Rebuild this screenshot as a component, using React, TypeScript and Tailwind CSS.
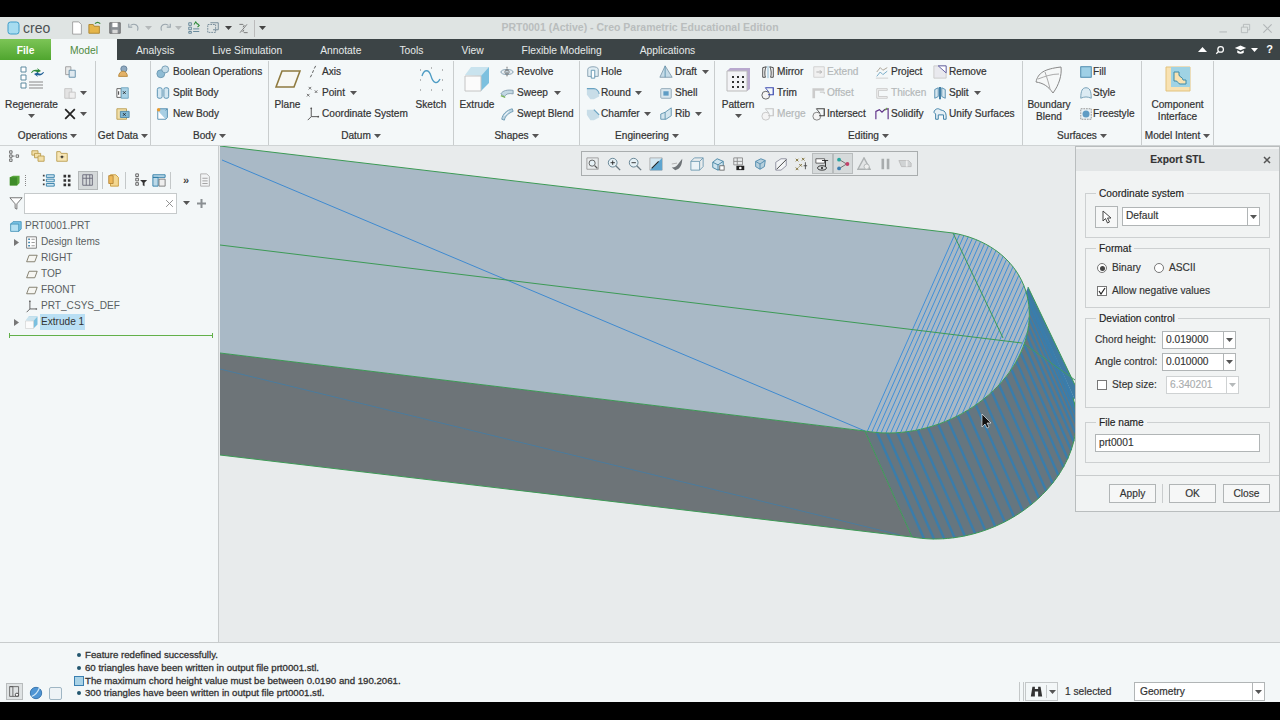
import type { ReactNode } from "react";

// small svg wrapper for the toolbar glyphs
function Ic({ s = 14, v = 16, children }: { s?: number; v?: number; children: ReactNode }) {
  return (
    <svg width={s} height={s} viewBox={`0 0 ${v} ${v}`} fill="none" className="shrink-0">
      {children}
    </svg>
  );
}

function Caret({ c = "#555" }: { c?: string }) {
  return (
    <svg width="7" height="4" viewBox="0 0 7 4" className="shrink-0">
      <path d="M0 0h7L3.5 4z" fill={c} />
    </svg>
  );
}

const Copy = () => (
  <Ic>
    <path d="M3 2h6v9H3z" fill="#e8eaea" stroke="#999" />
    <path d="M7 6h7v8H7z" fill="#dfe9ef" stroke="#5e8aa6" />
  </Ic>
);
const Paste = () => (
  <Ic>
    <path d="M2 3h8v11H2z" fill="#e3e3e3" stroke="#c4c4c4" />
    <path d="M7 7h7v7H7z" fill="#eee" stroke="#c4c4c4" />
  </Ic>
);
const Cross = () => (
  <Ic>
    <path d="M2.5 2.5l11 11M13.5 2.5l-11 11" stroke="#222" strokeWidth="2" />
  </Ic>
);
const GetA = () => (
  <Ic>
    <circle cx="9" cy="4.5" r="3.5" fill="#8fa9c0" stroke="#5e7c96" />
    <path d="M3 13c0-4 3-6 5-6s5 2 5 6z" fill="#e3b269" stroke="#b58637" />
  </Ic>
);
const GetB = () => (
  <Ic>
    <path d="M1 3h5v10H1z" fill="#fff" stroke="#555" />
    <path d="M6 2h8v12H6z" fill="#a9d2e6" stroke="#6da3bf" />
    <path d="M3 6v4M8 6l3 3M11 6L8 9" stroke="#222" />
  </Ic>
);
const GetC = () => (
  <Ic>
    <path d="M1 2h11v12H1z" fill="#f1dfa8" stroke="#b99c4d" />
    <path d="M5 5h10v7H5z" fill="#7fb6d4" stroke="#4e86a6" />
    <path d="M8 7l3 3M11 7l-3 3" stroke="#222" />
  </Ic>
);
const BoolIc = () => (
  <Ic>
    <circle cx="5.5" cy="10" r="4.5" fill="#8fbcd4" stroke="#6a97b0" />
    <circle cx="10.5" cy="5" r="4" fill="#c5dce8" stroke="#6a97b0" />
  </Ic>
);
const SplitBody = () => (
  <Ic>
    <rect x="1.5" y="2" width="5.5" height="12" rx="2" fill="#d4e7f1" stroke="#4b88ab" />
    <rect x="9" y="2" width="5.5" height="12" rx="2" fill="#d4e7f1" stroke="#4b88ab" />
  </Ic>
);
const NewBody = () => (
  <Ic>
    <path d="M2 4h9v10H2z" fill="#fff" stroke="#4b88ab" />
    <path d="M2 4l2-2h9v10l-2 2M11 4l2-2" fill="#a8cfe4" stroke="#4b88ab" />
    <circle cx="3" cy="3" r="2" fill="#e79a2e" />
  </Ic>
);
const PlaneIc = ({ s = 26 }: { s?: number }) => (
  <Ic s={s} v={26}>
    <path d="M7 5h18l-6 16H1z" fill="#f7f7f3" stroke="#8f7a3f" strokeWidth="1.6" />
  </Ic>
);
const AxisIc = () => (
  <Ic>
    <path d="M11 1l-1.5 3M8.6 6l-1.2 3M6.5 11l-1.5 3" stroke="#555" strokeWidth="1.1" />
  </Ic>
);
const PointIc = () => (
  <Ic>
    <path d="M3 1l3 3M6 1L3 4M10 5l3 3M13 5l-3 3M1 9l3 3M4 9l-3 3" stroke="#666" />
  </Ic>
);
const CsysIc = ({ s = 14 }: { s?: number }) => (
  <Ic s={s}>
    <path d="M6 1v10l8 0M6 11l-4 4" stroke="#555" strokeWidth="1.1" />
    <circle cx="6" cy="1.5" r="1" fill="#555" />
    <circle cx="14" cy="11" r="1" fill="#555" />
  </Ic>
);
const SketchIc = () => (
  <Ic s={26} v={26}>
    <path d="M2 4h1M13 2h1M24 4h1M2 14h1M24 14h1M2 24h1M13 24h1M24 24h1" stroke="#777" />
    <path d="M4 10c2-7 7-7 9 0s6 9 9 3" stroke="#4e9cc4" strokeWidth="1.3" />
  </Ic>
);
const ExtrudeIc = ({ s = 26 }: { s?: number }) => (
  <Ic s={s} v={26}>
    <path d="M7 1h18v16l-8 8V10z" fill="#7cc0df" />
    <path d="M1 9l6-8h18l-8 9z" fill="#c9e3ee" />
    <path d="M1 10h16v15H1z" fill="#fbfbfb" stroke="#c4c4c4" />
  </Ic>
);
const Revolve = () => (
  <Ic>
    <ellipse cx="8" cy="8" rx="7" ry="3" fill="#e7eef2" stroke="#7f9aad" />
    <circle cx="8" cy="8" r="2.5" fill="#c8d8e2" stroke="#777" />
    <path d="M8 2v12" stroke="#666" strokeDasharray="2 1" />
  </Ic>
);
const Sweep = () => (
  <Ic>
    <path d="M1 9c2-4 8-5 14-4v4c-5-1-8 0-10 3z" fill="#c3d8e3" stroke="#7f9aad" />
    <path d="M1 11l5 2" stroke="#78b35a" strokeWidth="1.4" />
  </Ic>
);
const SweptBlend = () => (
  <Ic>
    <path d="M2 14c1-6 5-10 12-12l1 3C10 7 6 10 5 15z" fill="#bad4e3" stroke="#6a97b0" />
    <path d="M5 10l5-5" stroke="#fff" />
  </Ic>
);
const Hole = () => (
  <Ic>
    <path d="M2 5c0-4 12-4 12 0v8H2z" fill="#e1edf3" stroke="#7f9aad" />
    <path d="M6 6h4v9H6z" fill="#fff" stroke="#5a90ad" />
  </Ic>
);
const Round = () => (
  <Ic>
    <path d="M1 3h8c3 0 6 3 6 6v3L9 15H5l-4-5z" fill="#c8dde8" />
    <path d="M1 3h8c3 0 6 3 6 6" stroke="#6aa3c2" strokeWidth="1.2" />
  </Ic>
);
const Chamfer = () => (
  <Ic>
    <path d="M1 3h8l6 6v3l-6 3H5L1 9z" fill="#c8dde8" />
    <path d="M9 3l6 6" stroke="#6aa3c2" strokeWidth="1.4" />
  </Ic>
);
const Draft = () => (
  <Ic>
    <path d="M7 1l8 13H1z" fill="#c6dce8" stroke="#7f9aad" />
    <path d="M7 1v13" stroke="#5a90ad" />
  </Ic>
);
const Shell = () => (
  <Ic>
    <rect x="2" y="3" width="12" height="11" rx="1" fill="#d8e6ee" stroke="#8aa2b3" />
    <rect x="5" y="6" width="6" height="5" fill="#5f9cc4" />
  </Ic>
);
const Rib = () => (
  <Ic>
    <path d="M2 8l5-2 7-5v9l-6 4H2z" fill="#d3e5ee" stroke="#5a90ad" />
    <path d="M7 6v8" stroke="#5a90ad" />
  </Ic>
);
const PatternIc = () => (
  <Ic s={26} v={26}>
    <path d="M2 5l3-3h20v21l-3 2z" fill="#b9a9cf" />
    <path d="M2 5h20v20H2z" fill="#f3f3f6" stroke="#bbb" />
    {[7, 12, 17].map((x) =>
      [10, 15, 20].map((y) => <rect key={`${x}${y}`} x={x} y={y} width="2" height="2" fill="#333" />),
    )}
  </Ic>
);
const Mirror = () => (
  <Ic>
    <path d="M6 2c-2 2-2 10-1 12H2V3zM10 2c2 2 2 10 1 12h3V3z" stroke="#333" fill="#fff" />
    <path d="M8 1v14" stroke="#7fb1cf" />
  </Ic>
);
const Trim = ({ c = "#555", b = "#3a49b0" }: { c?: string; b?: string }) => (
  <Ic>
    <circle cx="5.5" cy="10.5" r="4.5" fill="#f4f4f4" stroke={c} />
    <path d="M5 2h9v8H8" stroke={b} strokeWidth="1.4" />
    <path d="M5 2l4 5" stroke={b} />
  </Ic>
);
const Extend = () => (
  <Ic>
    <path d="M2 2h12v12H2z" fill="#f0f0f0" stroke="#cfcfcf" />
    <path d="M5 8h6M9 6l2 2-2 2" stroke="#aaa" />
  </Ic>
);
const Offset = () => (
  <Ic>
    <path d="M2 14V4h12" stroke="#ccc" strokeWidth="3" />
    <path d="M9 7h5v2" stroke="#bbb" />
  </Ic>
);
const Project = () => (
  <Ic>
    <path d="M2 13l4-5 3 3 5-4" stroke="#6aa3c2" />
    <path d="M2 8l4-5 3 3 5-3" stroke="#a39a8c" />
    <path d="M1 15h14" stroke="#ccc" />
  </Ic>
);
const Thicken = () => (
  <Ic>
    <path d="M2 3h12v2H4v7h10v2H2z" fill="#f2f2f2" stroke="#c8c8c8" />
  </Ic>
);
const Solidify = () => (
  <Ic>
    <path d="M1 14V5l4-2 3 3 3-3 4-1v12" stroke="#5d2f87" strokeWidth="1.3" />
    <path d="M11 4l3-3" stroke="#6aa83c" strokeWidth="1.2" />
  </Ic>
);
const Remove = () => (
  <Ic>
    <path d="M1 1h14v14H1z" fill="#e9e9ee" stroke="#c8c8c8" />
    <path d="M6 1l9 8V1z" fill="#fff" stroke="#53509a" />
  </Ic>
);
const Split = () => (
  <Ic>
    <path d="M2 4l4-2v10l-4 2zM10 2l4 2v10l-4-2z" fill="#d8e6ee" stroke="#4b88ab" />
    <path d="M8 1v14" stroke="#2c6f9a" strokeWidth="2" />
  </Ic>
);
const Unify = () => (
  <Ic>
    <path d="M1 6c1-4 5-5 7-3l3 1c2 0 4 3 4 6v4h-3V9H6v5H3V8z" fill="#e7f0f5" stroke="#3b7ea6" strokeWidth="1.1" />
  </Ic>
);
const BoundaryIc = () => (
  <Ic s={28} v={28}>
    <path d="M1 16C3 7 9 3 26 1c1 8-2 18-8 26C13 20 8 17 1 16z" fill="#f6f8f8" stroke="#888" />
    <path d="M10 6c2 6 4 12 5 17M3 13c8-3 14-5 21-5" stroke="#aaa" />
  </Ic>
);
const Fill = () => (
  <Ic>
    <rect x="2" y="2" width="12" height="12" fill="#9fd0e6" stroke="#3b7ea6" />
  </Ic>
);
const Style = () => (
  <Ic>
    <path d="M2 14c0-9 2-12 6-12s6 3 6 12c-4-2-8-2-12 0z" fill="#dcebf3" stroke="#6a97b0" />
  </Ic>
);
const Freestyle = () => (
  <Ic>
    <rect x="2" y="2" width="12" height="12" fill="#e9f1f5" stroke="#8a8a8a" strokeDasharray="2 1" />
    <circle cx="8" cy="8" r="4" fill="#5f9cc4" />
  </Ic>
);
const ComponentIc = () => (
  <Ic s={26} v={26}>
    <path d="M1 1h24v24H1z" fill="#f8e2b2" stroke="#e2c27c" />
    <path d="M6 1h19v20H6z" fill="#9fd3e4" />
    <path d="M9 6h5v3c0 2 4 2 4 5h3v4h-6c-2 0-2-3-4-3H9z" fill="#f8e2b2" stroke="#3a8aa8" />
  </Ic>
);
const RegenIc = () => (
  <Ic s={26} v={26}>
    <path d="M2 1h5v5H2zM2 9h5v5H2zM2 17h5v5H2z" fill="#fff" stroke="#5d8a9f" />
    <path d="M10 19h14M10 22h14M10 16h14" stroke="#888" />
    <path d="M12 7c1-3 4-4 7-3l-1-2 4 3-4 2 0-1c-2-1-4-1-5 1z" fill="#2f8a3a" />
    <path d="M25 6c-1 3-4 4-7 3l1 2-4-3 4-2v1c2 1 4 1 5-1z" fill="#1f5f96" />
  </Ic>
);

function Row({ icon, text, caret, off, tw = "gap-[2px]" }: { icon: ReactNode; text: string; caret?: boolean; off?: boolean; tw?: string }) {
  return (
    <div className={`flex h-[21px] items-center whitespace-nowrap ${tw}`}>
      {icon}
      <span className={off ? "text-[#b4b8b9]" : ""}>{text}</span>
      {caret && (
        <span className="ml-[3px] flex">
          <Caret />
        </span>
      )}
    </div>
  );
}

function Group({ label, w, children }: { label: string; w: string; children: ReactNode }) {
  return (
    <div className={`flex h-[84px] flex-col border-r border-[#c9cdce] ${w}`}>
      <div className="flex h-[64px]">{children}</div>
      <div className="flex h-[20px] items-center justify-center gap-[3px] whitespace-nowrap pt-[2px]">
        {label} <Caret />
      </div>
    </div>
  );
}

function Big({ icon, lines, caret, w }: { icon: ReactNode; lines: string[]; caret?: boolean; w: string }) {
  return (
    <div className={`flex flex-col items-center ${w}`}>
      <div className="flex h-[38px] items-start pt-[5px]">{icon}</div>
      {lines.map((l) => (
        <div key={l} className="h-[12px] whitespace-nowrap leading-[12px]">
          {l}
        </div>
      ))}
      {caret && (
        <div className="mt-[3px]">
          <Caret />
        </div>
      )}
    </div>
  );
}

function Ribbon() {
  return (
    <div className="flex h-[86px] border-b border-[#cfd3d4] bg-[#f4f8f9] pt-[1px] text-[10.1px] text-[#333] [-webkit-text-stroke-width:0.2px]">
      <Group label="Operations" w="w-[96px]">
        <Big w="w-[63px]" icon={<RegenIc />} lines={["Regenerate"]} caret />
        <div className="flex flex-col">
          <Row icon={<Copy />} text="" />
          <Row icon={<Paste />} text="" tw="gap-0" caret />
          <Row icon={<Cross />} text="" tw="gap-0" caret />
        </div>
      </Group>
      <Group label="Get Data" w="w-[55px]">
        <div className="flex flex-col pl-[20px]">
          <Row icon={<GetA />} text="" />
          <Row icon={<GetB />} text="" />
          <Row icon={<GetC />} text="" />
        </div>
      </Group>
      <Group label="Body" w="w-[118px]">
        <div className="flex flex-col pl-[5px]">
          <Row icon={<BoolIc />} text="Boolean Operations" tw="gap-[3px]" />
          <Row icon={<SplitBody />} text="Split Body" tw="gap-[3px]" />
          <Row icon={<NewBody />} text="New Body" tw="gap-[3px]" />
        </div>
      </Group>
      <Group label="Datum" w="w-[185px]">
        <Big w="w-[37px]" icon={<PlaneIc />} lines={["Plane"]} />
        <div className="flex w-[106px] flex-col">
          <Row icon={<AxisIc />} text="Axis" />
          <Row icon={<PointIc />} text="Point" caret />
          <Row icon={<CsysIc />} text="Coordinate System" />
        </div>
        <Big w="w-[38px]" icon={<SketchIc />} lines={["Sketch"]} />
      </Group>
      <Group label="Shapes" w="w-[126px]">
        <Big w="w-[46px]" icon={<ExtrudeIc />} lines={["Extrude"]} />
        <div className="flex flex-col">
          <Row icon={<Revolve />} text="Revolve" tw="gap-[3px]" />
          <Row icon={<Sweep />} text="Sweep" caret tw="gap-[3px]" />
          <Row icon={<SweptBlend />} text="Swept Blend" tw="gap-[3px]" />
        </div>
      </Group>
      <Group label="Engineering" w="w-[135px]">
        <div className="flex w-[79px] flex-col pl-[6px]">
          <Row icon={<Hole />} text="Hole" tw="gap-[1px]" />
          <Row icon={<Round />} text="Round" caret tw="gap-[1px]" />
          <Row icon={<Chamfer />} text="Chamfer" caret tw="gap-[1px]" />
        </div>
        <div className="flex flex-col">
          <Row icon={<Draft />} text="Draft" caret />
          <Row icon={<Shell />} text="Shell" />
          <Row icon={<Rib />} text="Rib" caret />
        </div>
      </Group>
      <Group label="Editing" w="w-[308px]">
        <Big w="w-[46px]" icon={<PatternIc />} lines={["Pattern"]} caret />
        <div className="flex w-[51px] flex-col">
          <Row icon={<Mirror />} text="Mirror" />
          <Row icon={<Trim />} text="Trim" />
          <Row icon={<Trim c="#c4c4c4" b="#c4c4c4" />} text="Merge" off />
        </div>
        <div className="flex w-[63px] flex-col">
          <Row icon={<Extend />} text="Extend" off tw="gap-[1px]" />
          <Row icon={<Offset />} text="Offset" off tw="gap-[1px]" />
          <Row icon={<Trim c="#777" b="#444" />} text="Intersect" tw="gap-[1px]" />
        </div>
        <div className="flex w-[58px] flex-col">
          <Row icon={<Project />} text="Project" />
          <Row icon={<Thicken />} text="Thicken" off />
          <Row icon={<Solidify />} text="Solidify" />
        </div>
        <div className="flex flex-col">
          <Row icon={<Remove />} text="Remove" />
          <Row icon={<Split />} text="Split" caret />
          <Row icon={<Unify />} text="Unify Surfaces" />
        </div>
      </Group>
      <Group label="Surfaces" w="w-[119px]">
        <Big w="w-[52px]" icon={<BoundaryIc />} lines={["Boundary", "Blend"]} />
        <div className="flex flex-col pl-[4px]">
          <Row icon={<Fill />} text="Fill" tw="gap-0" />
          <Row icon={<Style />} text="Style" tw="gap-0" />
          <Row icon={<Freestyle />} text="Freestyle" tw="gap-0" />
        </div>
      </Group>
      <Group label="Model Intent" w="w-[72px]">
        <Big w="w-full" icon={<ComponentIc />} lines={["Component", "Interface"]} />
      </Group>
    </div>
  );
}

function TitleBar() {
  return (
    <div className="relative flex h-[22px] items-center bg-[#dfe4e3] pl-[7px]">
      <svg width="13" height="14" viewBox="0 0 13 14" className="shrink-0">
        <rect x="1" y="1" width="11" height="12" rx="2.5" fill="#a6dcf0" stroke="#3f9cc9" />
      </svg>
      <span className="ml-[3px] w-[47px] text-[14px] text-[#4c5052]">creo</span>
      <div className="flex items-center">
        <Ic>
          <path d="M3 1h7l3 3v11H3z" fill="#fff" stroke="#999" />
        </Ic>
        <span className="ml-[4px] flex">
          <Ic>
            <path d="M1 4h5l1 2h6v8H1z" fill="#e5b54a" stroke="#a9812c" />
            <path d="M8 3c2-2 4-2 6 0" stroke="#3a8a3a" strokeWidth="1.4" />
          </Ic>
        </span>
        <span className="ml-[6px] flex">
          <Ic>
            <path d="M2 2h12v12H2z" fill="#8a8f94" stroke="#666" />
            <path d="M5 2h6v5H5z" fill="#fff" />
            <path d="M5 10h6v4H5z" fill="#d8d8d8" />
          </Ic>
        </span>
        <span className="ml-[5px] flex">
          <Ic>
            <path d="M4 5c5-3 10 0 8 6M2 3v4h4" stroke="#9aa5ad" strokeWidth="1.3" />
          </Ic>
        </span>
        <span className="ml-[4px] flex">
          <Caret c="#b5b9ba" />
        </span>
        <span className="ml-[6px] flex">
          <Ic>
            <path d="M12 5C7 2 2 5 4 11M14 3v4h-4" stroke="#9aa5ad" strokeWidth="1.3" />
          </Ic>
        </span>
        <span className="ml-[3px] flex">
          <Caret c="#b5b9ba" />
        </span>
        <span className="ml-[5px] flex">
          <Ic>
            <path d="M2 2h3v3H2zM2 7h3v3H2zM2 12h3v2H2zM7 9h7M7 12h7" stroke="#5a7f92" />
            <path d="M8 4l2-3 2 3M12 3l2 2-2 2" stroke="#2f8a3a" strokeWidth="1.2" />
          </Ic>
        </span>
        <span className="ml-[5px] flex">
          <Ic>
            <path d="M2 4h9v9H2z" stroke="#6c8291" strokeDasharray="2 1" />
            <path d="M5 2h9v8H8" stroke="#6c8291" />
          </Ic>
        </span>
        <span className="ml-[5px] flex">
          <Caret c="#444" />
        </span>
        <span className="ml-[6px] flex">
          <Ic s={11}>
            <path d="M2 2h5l2 2-2 2M14 14H9l-2-2 2-2M3 14L13 2" stroke="#666" strokeWidth="1.2" />
          </Ic>
        </span>
        <span className="ml-[5px] h-[17px] w-px bg-[#bbb]" />
        <span className="ml-[4px] flex">
          <Caret c="#444" />
        </span>
      </div>
      <div className="absolute inset-x-0 top-0 flex h-[22px] items-center justify-center text-[10.5px] font-bold text-[#b9bdbd]">
        PRT0001 (Active) - Creo Parametric Educational Edition
      </div>
      <div className="ml-auto flex items-center gap-[11px] pr-[7px]">
        <Ic s={11}>
          <path d="M2 13h11" stroke="#b1b6b7" strokeWidth="1.4" />
        </Ic>
        <Ic s={11}>
          <path d="M2 6h9v8H2zM5 6V2h9v8h-3" stroke="#b1b6b7" strokeWidth="1.2" />
        </Ic>
        <Ic s={11}>
          <path d="M2 2l12 12M14 2L2 14" stroke="#b1b6b7" strokeWidth="1.6" />
        </Ic>
      </div>
    </div>
  );
}

function Tabs() {
  const tabs = ["Analysis", "Live Simulation", "Annotate", "Tools", "View", "Flexible Modeling", "Applications"];
  return (
    <div className="flex h-[21px] items-stretch bg-[#3c4446] text-[10.3px]">
      <div className="flex w-[51px] items-center justify-center bg-linear-to-b from-[#7cc556] to-[#4fa52e] pt-[2px] font-bold text-white">File</div>
      <div className="flex w-[66px] items-center justify-center bg-[#f4f8f9] pt-[2px] text-[#4f8a3f]">Model</div>
      {tabs.map((t) => (
        <div key={t} className="flex items-center px-[19px] pt-[2px] whitespace-nowrap text-[#e6eaea]">
          {t}
        </div>
      ))}
      <div className="ml-auto flex items-center pr-[7px]">
        <svg width="9" height="5" viewBox="0 0 9 5">
          <path d="M0 5l4.5-5L9 5z" fill="#fff" />
        </svg>
        <span className="ml-[8px] flex">
          <Ic s={10}>
            <circle cx="9" cy="7" r="4.5" stroke="#fff" strokeWidth="2" />
            <path d="M6 10l-4 4" stroke="#fff" strokeWidth="2" />
          </Ic>
        </span>
        <span className="ml-[9px] flex">
          <Ic s={13}>
            <path d="M1 6l7-3 7 3-7 3z" fill="#fff" />
            <path d="M4 9v3c2 1.5 6 1.5 8 0V9l-4 2z" fill="#fff" />
          </Ic>
        </span>
        <span className="ml-[4px] flex">
          <Caret c="#fff" />
        </span>
        <span className="ml-[8px] text-[11px] font-bold text-white">?</span>
      </div>
    </div>
  );
}

function TreeRow({ arrow, icon, text, sel, pl }: { arrow?: boolean; icon: ReactNode; text: string; sel?: boolean; pl: string }) {
  return (
    <div className={`relative flex h-[16px] items-center gap-[2px] ${pl}`}>
      {arrow && (
        <svg width="5" height="7" viewBox="0 0 5 7" className="absolute left-[14px] top-[5px]">
          <path d="M0 0l5 3.5L0 7z" fill="#777" />
        </svg>
      )}
      {icon}
      <span className={`whitespace-nowrap px-px leading-[16px] ${sel ? "bg-[#b9dff4] text-[#333]" : ""}`}>{text}</span>
    </div>
  );
}

const Cube = () => (
  <Ic s={13}>
    <path d="M2 5l3-3h10v9l-3 3z" fill="#7cc5e6" stroke="#3f8fb5" />
    <path d="M2 5h10v9H2z" fill="#b5e0f2" stroke="#3f8fb5" />
  </Ic>
);
const SmallPlane = () => (
  <Ic s={13}>
    <path d="M5 4h10l-3 8H2z" fill="#f6f6f2" stroke="#6f6a58" />
  </Ic>
);

function LeftPanel() {
  return (
    <div className="flex w-[219px] shrink-0 flex-col border-r border-[#c8cccd] bg-[#f3f7f8] text-[10.1px] text-[#5a5f62]">
      <div className="flex h-[20px] items-center gap-[10px] pl-[8px]">
        <Ic s={13}>
          <path d="M2 1h3v3H2zM2 6h3v3H2zM2 11h3v3H2zM5 7.5h3M10 6h3v3h-3z" stroke="#555" />
        </Ic>
        <Ic>
          <path d="M1 2h7v5H1z" fill="#f2dfa8" stroke="#b99c4d" />
          <path d="M4 5h7v5H4z" fill="#f2dfa8" stroke="#b99c4d" />
          <path d="M8 8h7v6H8z" fill="#f2dfa8" stroke="#b99c4d" />
        </Ic>
        <Ic>
          <path d="M2 3h4l1 2h7v9H2z" fill="#f7e6b5" stroke="#b99c4d" />
          <path d="M8 7l1 1.5L11 9l-2 .5L8 11l-1-1.5L5 9l2-.5z" fill="#222" />
        </Ic>
      </div>
      <div className="mt-[3px] flex h-[22px] items-center pl-[9px]">
        <Ic s={13}>
          <path d="M1 4l4-2h8v9l-3 3H1z" fill="#5aa83c" />
          <path d="M1 4h9v10H1z" fill="#3f8c2a" />
        </Ic>
        <span className="ml-[3px] h-[11px] w-0 border-l border-dotted border-[#888]" />
        <div className="ml-[16px] flex items-center gap-[4px]">
          <Ic>
            <path d="M1 3h2M1 8h2M1 13h2" stroke="#444" strokeWidth="2" />
            <path d="M5 2h9v3H5zM5 7h9v3H5zM5 12h9v3H5z" fill="#cfe6f2" stroke="#2d7aa6" />
          </Ic>
          <Ic>
            <path d="M4 2h3v3H4zM9 2h3v3H9zM4 7h3v3H4zM9 7h3v3H9zM4 12h3v3H4zM9 12h3v3H9z" fill="#333" />
          </Ic>
          <div className="flex h-[19px] w-[20px] items-center justify-center border border-[#b4b8b9] bg-[#d5d9da]">
            <Ic>
              <path d="M2 2h11v12H2zM6 2v12M10 2v12M2 6h11" stroke="#667" />
            </Ic>
          </div>
          <span className="h-[17px] w-px bg-[#c4c8c9]" />
          <Ic>
            <path d="M4 2h6l3 3v10H4z" fill="#f4d892" stroke="#c79a3b" />
            <path d="M2 3h5v9H2z" fill="#eeb95a" stroke="#b58637" />
          </Ic>
          <span className="h-[17px] w-px bg-[#c4c8c9]" />
          <span className="w-0" />
          <Ic>
            <path d="M2 1h3v3H2zM2 6h3v3H2zM2 11h3v3H2z" stroke="#555" />
            <path d="M7 8h8l-3 3v4l-2-1v-3z" fill="#333" />
          </Ic>
          <Ic>
            <path d="M1 2h14v3H1zM1 5h6v10H1z" fill="#bcd9e8" stroke="#2d7aa6" />
            <path d="M8 7h7v8H8z" fill="#eee" stroke="#777" />
          </Ic>
          <span className="h-[17px] w-px bg-[#c4c8c9]" />
          <span className="ml-[8px] text-[11px] font-bold leading-none text-[#444]">»</span>
          <span className="w-[1px]" />
          <Ic>
            <path d="M3 1h7l3 3v11H3z" fill="#f2f4f5" stroke="#aaa" />
            <path d="M5 6h6M5 9h6M5 12h6" stroke="#999" />
          </Ic>
        </div>
      </div>
      <div className="mt-[1px] flex h-[22px] items-center pl-[9px]">
        <Ic>
          <path d="M1 2h14L9 9v6l-2-1V9z" fill="#fff" stroke="#666" />
        </Ic>
        <div className="ml-[1px] flex h-[21px] w-[153px] items-center justify-end border border-[#c6cacb] bg-white pr-[2px]">
          <Ic s={9}>
            <path d="M2 2l12 12M14 2L2 14" stroke="#888" strokeWidth="1.6" />
          </Ic>
        </div>
        <span className="ml-[6px]">
          <Caret />
        </span>
        <svg width="9" height="9" viewBox="0 0 9 9" className="ml-[7px]">
          <path d="M3.5 0h2v3.5H9v2H5.5V9h-2V5.5H0v-2h3.5z" fill="#8a8f92" />
        </svg>
      </div>
      <div className="mt-[4px] flex flex-col">
        <TreeRow pl="pl-[9px]" icon={<Cube />} text="PRT0001.PRT" />
        <TreeRow
          pl="pl-[25px]"
          arrow
          icon={
            <Ic s={13}>
              <path d="M2 1h12v14H2z" fill="#fff" stroke="#666" />
              <path d="M4 4h2M4 8h2M4 12h2" stroke="#2d7aa6" strokeWidth="2" />
              <path d="M8 4h4M8 8h4M8 12h4" stroke="#888" />
            </Ic>
          }
          text="Design Items"
        />
        <TreeRow pl="pl-[25px]" icon={<SmallPlane />} text="RIGHT" />
        <TreeRow pl="pl-[25px]" icon={<SmallPlane />} text="TOP" />
        <TreeRow pl="pl-[25px]" icon={<SmallPlane />} text="FRONT" />
        <TreeRow pl="pl-[25px]" icon={<CsysIc s={13} />} text="PRT_CSYS_DEF" />
        <TreeRow pl="pl-[25px]" arrow icon={<ExtrudeIc s={13} />} text="Extrude 1" sel />
      </div>
      <div className="ml-[9px] mr-[5px] mt-[3px] flex h-[5px] items-center">
        <span className="h-[5px] w-px bg-[#62b04a]" />
        <span className="h-px flex-1 bg-[#62b04a]" />
        <span className="h-[5px] w-px bg-[#62b04a]" />
      </div>
    </div>
  );
}

// end section of the part, sampled from an ellipse
const arcAt = (deg: number): [number, number] => {
  const t = (deg * Math.PI) / 180;
  return [909 + 112 * Math.cos(t) + 44 * Math.sin(t), 332 + 20 * Math.cos(t) - 99 * Math.sin(t)];
};
const DROP: [number, number] = [47, 106];
const range = (a: number, b: number, n: number) => Array.from({ length: n + 1 }, (_, i) => a + ((b - a) * i) / n);
const pts = (list: number[], dx = 0, dy = 0) =>
  list
    .map((d) => {
      const [x, y] = arcAt(d);
      return `${x + dx},${y + dy}`;
    })
    .join(" ");
const TOP_ARC = pts(range(90, -90, 60));
const SIDE_UP = pts(range(-90, 35, 50));
const SIDE_LOW = pts(range(35, -90, 50), DROP[0], DROP[1]);
// chords of the end face are evenly spaced across it
const hatch = range(0.02, 0.98, 24).map((k) => (Math.acos(k) * 180) / Math.PI);
const stripes = range(-84, 34, 24);

function Scene() {
  return (
    <svg viewBox="219 146 1061 496" className="block h-full w-full">
      <polygon points="220,353 865,431 912,537 220,455" fill="#6d7478" />
      <polygon points={`${SIDE_UP} ${SIDE_LOW}`} fill="#66767f" />
      <polygon points="1028,287 1075,385 1075,400 1026,292" fill="#3f7ba3" />
      {stripes.map((d) => {
        const [x, y] = arcAt(d);
        return <line key={d} x1={x} y1={y} x2={x + DROP[0]} y2={y + DROP[1]} stroke="#3a7dab" strokeWidth="2.4" />;
      })}
      <line x1="1023" y1="343" x2="1075" y2="380" stroke="#3f9a66" strokeWidth="1" />
      <polygon points={`220,146 ${TOP_ARC} 220,353`} fill="#a9b9c6" />
      {hatch.map((d) => {
        const [a, b] = arcAt(d);
        const [c, e] = arcAt(-d);
        return <line key={d} x1={a} y1={b} x2={c} y2={e} stroke="#3f8fd8" strokeWidth="1" />;
      })}
      <line x1="222" y1="160" x2="865" y2="431" stroke="#3f8ad0" strokeWidth="1" />
      <line x1="220" y1="369" x2="900" y2="535" stroke="#3d7fae" strokeWidth="1" opacity="0.7" />
      <g stroke="#3c9a55" strokeWidth="1" fill="none">
        <line x1="220" y1="146" x2="953" y2="233" />
        <line x1="220" y1="245" x2="1022" y2="343" />
        <line x1="953" y1="233" x2="1003" y2="338" />
        <line x1="220" y1="353" x2="865" y2="431" />
        <line x1="865" y1="431" x2="912" y2="537" />
        <line x1="220" y1="455" x2="912" y2="537" />
        <line x1="1028" y1="287" x2="1075" y2="385" />
        <polyline points={TOP_ARC} />
        <polyline points={SIDE_LOW} />
      </g>
      <path d="M982 414v13l3-3 2 4 2-1-2-4h4z" fill="#111" stroke="#fff" strokeWidth="0.6" />
    </svg>
  );
}

function MiniToolbar() {
  const icons: ReactNode[] = [
    <>
      <path d="M1 1h13v13H1z" stroke="#999" />
      <circle cx="7" cy="7" r="3.5" stroke="#555" fill="#e6f1f6" />
      <path d="M10 10l3 3" stroke="#555" strokeWidth="1.4" />
    </>,
    <>
      <circle cx="6.5" cy="6.5" r="5" stroke="#5a7a8c" fill="#e6f1f6" />
      <path d="M4 6.5h5M6.5 4v5" stroke="#222" />
      <path d="M10 10l5 5" stroke="#6b7c85" strokeWidth="1.6" />
    </>,
    <>
      <circle cx="6.5" cy="6.5" r="5" stroke="#5a7a8c" fill="#e6f1f6" />
      <path d="M4 6.5h5" stroke="#222" />
      <path d="M10 10l5 5" stroke="#6b7c85" strokeWidth="1.6" />
    </>,
    <>
      <path d="M1 1h14v14H1z" fill="#d5e8f2" stroke="#aaa" />
      <path d="M1 15L15 1v14z" fill="#5ea5cf" />
      <path d="M3 13l8-8" stroke="#222" strokeWidth="1.2" />
    </>,
    <>
      <path d="M2 12c4 0 6-2 8-5l4-5c0 6-2 12-8 13z" fill="#6f7478" />
      <path d="M2 8l6-1" stroke="#aaa" />
    </>,
    <>
      <path d="M1 5h10v10H1z" fill="#eaf3f7" stroke="#6a97b0" />
      <path d="M1 5l4-4h10v10l-4 4M11 5l4-4" stroke="#6a97b0" />
    </>,
    <>
      <path d="M2 6l5-4 7 3v7l-6 3-6-3z" fill="#cfe4ef" stroke="#3f7f9f" />
      <path d="M2 6l6 3 6-4M8 9v6" stroke="#3f7f9f" />
      <rect x="10" y="10" width="5" height="5" fill="#fff" stroke="#666" />
    </>,
    <>
      <path d="M2 1h10v8H2zM2 5h10M6 1v8" stroke="#888" />
      <path d="M5 10h9v5H5z" fill="#222" />
      <circle cx="9.5" cy="12.5" r="1.5" fill="#fff" />
    </>,
    <>
      <path d="M3 5l6-3 5 2-1 7-5 3-5-3z" fill="#b6cfdc" stroke="#4b88ab" />
      <path d="M3 5l5 3 6-4M8 8v6" stroke="#4b88ab" />
    </>,
    <>
      <path d="M2 6l6-4h6v8l-6 5H2z" stroke="#889" fill="#f3f5f6" />
      <path d="M3 14L14 3" stroke="#444" strokeWidth="1.1" />
    </>,
    <>
      <path d="M2 2l3 3M5 2L2 5M9 1l3 3M12 1L9 4M6 8l3 3M9 8l-3 3M2 12l3 3M5 12l-3 3" stroke="#7a6a2e" />
      <path d="M13 6v8M11 10h4" stroke="#444" />
    </>,
    <>
      <path d="M1 2h10v5H1z" fill="#fff" stroke="#555" />
      <path d="M8 4h7M12 4v7" stroke="#222" />
      <ellipse cx="8" cy="12.5" rx="5" ry="2.5" stroke="#222" />
      <circle cx="8" cy="12.5" r="1.2" fill="#222" />
    </>,
    <>
      <path d="M4 3l8 5-8 5" stroke="#666" />
      <circle cx="3.5" cy="3" r="2.2" fill="#2aa6a0" />
      <circle cx="13" cy="8" r="2.2" fill="#c2406a" />
      <circle cx="3.5" cy="13" r="2.2" fill="#3e7fb0" />
    </>,
    <>
      <path d="M8 1l7 13H1z" stroke="#aeb2b3" strokeWidth="1.6" fill="#e2e4e5" />
      <circle cx="11" cy="11" r="3" stroke="#aeb2b3" fill="#eee" />
    </>,
    <>
      <path d="M4 2h3v12H4zM10 2h3v12h-3z" fill="#a8acad" />
    </>,
    <>
      <path d="M1 4h11l3 3v4H4z" fill="#d0d3d4" stroke="#bbb" />
      <path d="M10 4v7" stroke="#eee" strokeWidth="2" />
    </>,
  ];
  return (
    <div className="absolute left-[362px] top-[5px] flex h-[25px] w-[337px] items-center border border-[#a9adae] bg-[#e9eced] pl-[1px]">
      {icons.map((ic, i) => (
        <div
          key={i}
          className={`flex h-[21px] w-[20.8px] items-center justify-center ${i === 11 || i === 12 ? "border border-[#b8bcbd] bg-[#d6dadb]" : ""}`}
        >
          <Ic>{ic}</Ic>
        </div>
      ))}
    </div>
  );
}

function Drop({ value, w, off }: { value: string; w: string; off?: boolean }) {
  return (
    <div className={`flex h-[18px] items-stretch border bg-white ${off ? "border-[#cfd2d3] bg-[#f1f3f3] text-[#aaaeaf]" : "border-[#b1b5b6]"} ${w}`}>
      <span className="flex-1 pl-[3px] leading-[16px]">{value}</span>
      <span className={`flex w-[12px] items-center justify-center border-l ${off ? "border-[#cfd2d3]" : "border-[#b1b5b6]"}`}>
        <Caret c={off ? "#b5b9ba" : "#555"} />
      </span>
    </div>
  );
}

const Box = ({ on }: { on?: boolean }) => (
  <span className="flex h-[10px] w-[10px] items-center justify-center border border-[#777] bg-white">
    {on && (
      <svg width="8" height="8" viewBox="0 0 8 8">
        <path d="M1 4l2 3 4-6" stroke="#222" strokeWidth="1.2" fill="none" />
      </svg>
    )}
  </span>
);

const Radio = ({ on }: { on?: boolean }) => (
  <span className="flex h-[10px] w-[10px] items-center justify-center rounded-full border border-[#777] bg-white">
    {on && <span className="h-[5px] w-[5px] rounded-full bg-[#444]" />}
  </span>
);

function Btn({ children, w }: { children: string; w: string }) {
  return <div className={`flex h-[19px] items-center justify-center border border-[#b1b5b6] bg-[#f6f7f7] ${w}`}>{children}</div>;
}

function Dialog() {
  const fs = "border border-[#cdd0d1] px-[9px]";
  const lg = "ml-[1px] translate-y-[1px] px-[3px] text-[#222] leading-[12px]";
  return (
    <div className="absolute right-0 top-0 flex h-[366px] w-[205px] flex-col border border-[#b9bdbe] bg-[#f1f3f3] text-[10.2px] text-[#333] [-webkit-text-stroke-width:0.15px]">
      <div className="relative mt-[2px] flex h-[22px] items-center justify-center bg-[#e2e5e6] font-bold">
        Export STL
        <svg width="8" height="8" viewBox="0 0 8 8" className="absolute right-[8px] top-[7px]">
          <path d="M1 1l6 6M7 1L1 7" stroke="#555" strokeWidth="1.5" />
        </svg>
      </div>
      <div className="flex flex-col px-[9px] pt-[16px]">
        <fieldset className={`h-[51px] ${fs}`}>
          <legend className={lg}>Coordinate system</legend>
          <div className="mt-[7px] flex items-start gap-[4px]">
            <div className="flex h-[22px] w-[23px] items-center justify-center border border-[#b1b5b6] bg-[#f6f7f7]">
              <svg width="10" height="14" viewBox="0 0 10 14">
                <path d="M1 1v10l2.5-2.5L5.5 13l2-1-2-4H9z" fill="#fff" stroke="#444" />
              </svg>
            </div>
            <Drop value="Default" w="w-[138px] h-[19px] mt-[1px]" />
          </div>
        </fieldset>
        <fieldset className={`mt-[4px] h-[66px] ${fs}`}>
          <legend className={lg}>Format</legend>
          <div className="mt-[7px] flex h-[14px] items-center pl-[2px]">
            <Radio on />
            <span className="ml-[5px] w-[42px]">Binary</span>
            <Radio />
            <span className="ml-[5px]">ASCII</span>
          </div>
          <div className="mt-[9px] flex h-[14px] items-center gap-[5px] pl-[2px]">
            <Box on />
            Allow negative values
          </div>
        </fieldset>
        <fieldset className={`mt-[4px] h-[96px] ${fs}`}>
          <legend className={lg}>Deviation control</legend>
          <div className="mt-[7px] flex h-[18px] items-center">
            <span className="w-[67px]">Chord height:</span>
            <Drop value="0.019000" w="w-[74px]" />
          </div>
          <div className="mt-[4px] flex h-[18px] items-center">
            <span className="w-[67px]">Angle control:</span>
            <Drop value="0.010000" w="w-[74px]" />
          </div>
          <div className="mt-[5px] flex h-[18px] items-center pl-[2px]">
            <Box />
            <span className="ml-[5px] w-[54px]">Step size:</span>
            <Drop value="6.340201" w="w-[73px]" off />
          </div>
        </fieldset>
        <fieldset className={`mt-[8px] h-[47px] ${fs}`}>
          <legend className={lg}>File name</legend>
          <div className="mt-[6px] h-[18px] w-[165px] border border-[#b1b5b6] bg-white pl-[3px] leading-[16px]">prt0001</div>
        </fieldset>
      </div>
      <div className="mt-[12px] h-px bg-[#c9cccd]" />
      <div className="mt-[8px] flex items-center pl-[33px]">
        <Btn w="w-[47px]">Apply</Btn>
        <span className="mx-[6px] h-[19px] w-px bg-[#c9cccd]" />
        <Btn w="w-[47px]">OK</Btn>
        <span className="w-[7px]" />
        <Btn w="w-[47px]">Close</Btn>
      </div>
    </div>
  );
}

function Messages() {
  const msgs = [
    "Feature redefined successfully.",
    "60 triangles have been written in output file prt0001.stl.",
    "The maximum chord height value must be between 0.0190 and 190.2061.",
    "300 triangles have been written in output file prt0001.stl.",
  ];
  return (
    <div className="flex h-[60px] items-stretch border-t border-[#c8cccd] bg-[#f3f7f8] text-[#333]">
      <div className="flex w-[72px] items-end gap-[6px] pb-[2px] pl-[6px]">
        <div className="flex h-[17px] w-[17px] items-center justify-center border border-[#b8bcbd] bg-[#dfe3e4]">
          <Ic s={13}>
            <path d="M2 2h11v12H2zM2 2h4v12" stroke="#555" />
            <circle cx="11" cy="12" r="2" fill="#fff" stroke="#333" />
          </Ic>
        </div>
        <Ic>
          <circle cx="8" cy="8" r="6.5" fill="#4f95d4" stroke="#2f6ea8" />
          <path d="M3 12c3-1 7-5 9-10" stroke="#cfe6f5" strokeWidth="1.4" />
        </Ic>
        <span className="h-[13px] w-[13px] rounded-[2px] border border-[#9fb6c4] bg-[#eef3f6]" />
      </div>
      <div className="flex flex-col pt-[6px] text-[9.66px] [-webkit-text-stroke-width:0.3px]">
        {msgs.map((m, i) => (
          <div key={m} className="flex h-[12.7px] items-center whitespace-nowrap leading-[12px]">
            <span className="flex w-[13px] items-center justify-center">
              {i === 2 ? (
                <span className="h-[10px] w-[10px] border border-[#3a7fb0] bg-[#a9d2e6]" />
              ) : (
                <span className="ml-[5px] mr-[4px] h-[4px] w-[4px] rounded-full bg-[#22566f]" />
              )}
            </span>
            {m}
          </div>
        ))}
      </div>
      <div className="ml-auto flex items-end pb-[1px] pr-[15px] text-[10.2px] [-webkit-text-stroke-width:0.2px]">
        <div className="flex h-[19px] items-center">
          <span className="h-[19px] w-px bg-[#c4c8c9]" />
          <span className="ml-[3px] h-[19px] w-px bg-[#c4c8c9]" />
          <div className="ml-[1px] flex h-[19px] w-[33px] items-center border border-[#c4c8c9]">
            <span className="flex w-[21px] justify-center border-r border-[#c4c8c9]">
              <Ic s={13}>
                <path d="M3 2h3v3h4V2h3l2 12h-5V8H6v6H1z" fill="#333" />
              </Ic>
            </span>
            <span className="flex flex-1 justify-center">
              <Caret />
            </span>
          </div>
          <span className="ml-[7px] w-[69px]">1 selected</span>
          <div className="flex h-[19px] w-[131px] items-stretch border border-[#b1b5b6] bg-white">
            <span className="flex-1 pl-[5px] leading-[17px]">Geometry</span>
            <span className="flex w-[12px] items-center justify-center border-l border-[#b1b5b6]">
              <Caret />
            </span>
          </div>
        </div>
      </div>
    </div>
  );
}

export default function App() {
  return (
    <div className="flex h-[720px] w-[1280px] flex-col overflow-hidden bg-black font-['Liberation_Sans',Arial,sans-serif]">
      <div className="h-[17px] shrink-0 bg-black" />
      <TitleBar />
      <Tabs />
      <Ribbon />
      <div className="flex h-[496px] shrink-0">
        <LeftPanel />
        <div className="relative flex-1 bg-[#e8ebec]">
          <Scene />
          <MiniToolbar />
          <Dialog />
        </div>
      </div>
      <Messages />
    </div>
  );
}
